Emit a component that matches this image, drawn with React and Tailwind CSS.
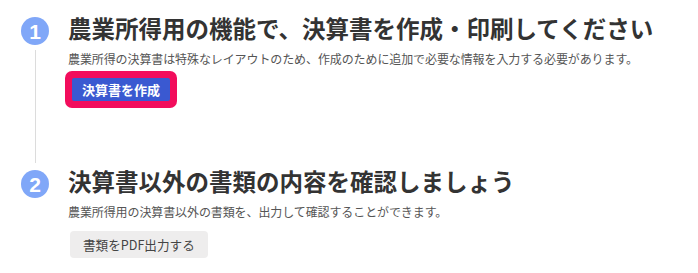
const jp = '"Noto Sans CJK JP", "Noto Sans", sans-serif';

function StepBadge({ n }) {
  return (
    <div className="mt-[4px] flex h-[28px] w-[28px] shrink-0 items-center justify-center rounded-full bg-[#80a7f8] text-[21px] font-bold leading-none text-white [font-family:'Liberation_Sans',Arial,sans-serif]">
      {n}
    </div>
  );
}

function Step({ n, title, desc, last, children }) {
  return (
    <div className="flex gap-[19px]">
      <div className="flex w-[28px] shrink-0 flex-col items-center">
        <StepBadge n={n} />
        {!last && <div className="mt-[5px] mb-[3px] w-px flex-1 bg-[#dcdcdc]" />}
      </div>
      <div className={last ? 'pb-4' : 'pb-[58px]'}>
        <h2 className="text-[23.5px] font-bold leading-[30px] text-[#333333]">{title}</h2>
        <p className="mt-[7px] text-[12px] leading-[18px] tracking-[-0.1px] text-[#555555]">{desc}</p>
        {children}
      </div>
    </div>
  );
}

export default function App() {
  return (
    <div className="min-h-[273px] bg-white pl-[21px] pt-[13px]" style={{ fontFamily: jp }}>
      <Step
        n="1"
        title="農業所得用の機能で、決算書を作成・印刷してください"
        desc="農業所得の決算書は特殊なレイアウトのため、作成のために追加で必要な情報を入力する必要があります。"
      >
        <div className="ml-[-3px] mt-[3px] inline-block rounded-[7px] bg-[#f20d5c] p-[7px]">
          <button className="block h-[23px] rounded-[2px] bg-[#3a59d1] px-[10px] text-[13px] font-bold leading-[23px] text-white">
            決算書を作成
          </button>
        </div>
      </Step>
      <Step
        n="2"
        last
        title="決算書以外の書類の内容を確認しましょう"
        desc="農業所得用の決算書以外の書類を、出力して確認することができます。"
      >
        <button className="ml-[2px] mt-[10px] block h-[27px] rounded-[4px] bg-[#eeeded] px-[13px] text-[12.6px] leading-[27px] text-[#444444]">
          書類をPDF出力する
        </button>
      </Step>
    </div>
  );
}
